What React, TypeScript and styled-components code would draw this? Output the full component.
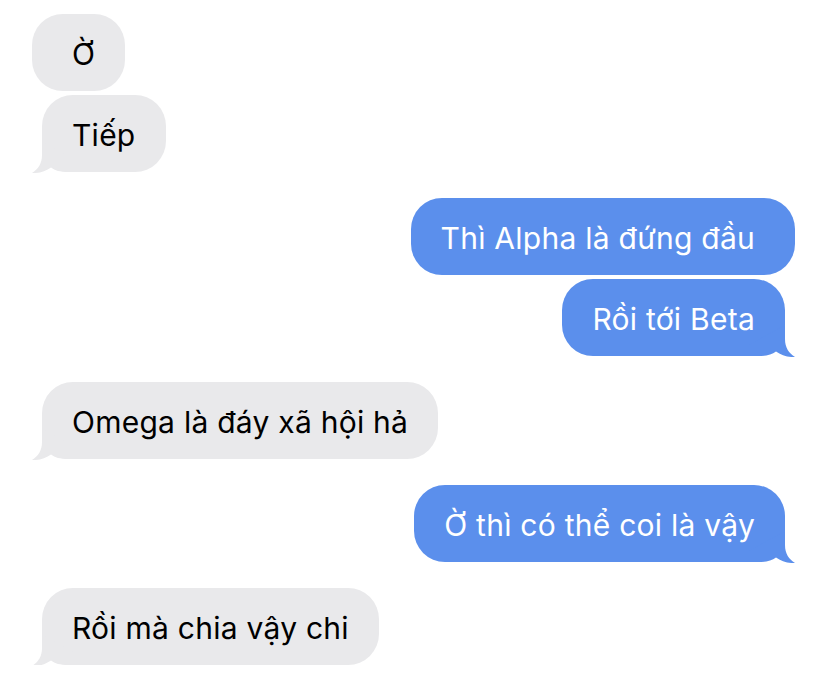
import styled, { createGlobalStyle } from "styled-components"

type Side = "them" | "me"

const GlobalStyle = createGlobalStyle`
  body {
    margin: 0;
    background: #ffffff;
    font-family: Inter, "Noto Sans", "Liberation Sans", sans-serif;
  }
`

const Thread = styled.div`
  display: flex;
  flex-direction: column;
  gap: 26px;
  padding: 14px 33px 0 32px;
`

const Group = styled.div<{ $side: Side }>`
  display: flex;
  flex-direction: column;
  align-items: ${(p) => (p.$side === "me" ? "flex-end" : "flex-start")};
  gap: 4px;
`

const Bubble = styled.div<{ $side: Side; $tail?: boolean }>`
  position: relative;
  box-sizing: border-box;
  height: 77px;
  display: flex;
  align-items: center;
  border-radius: 31px;
  font-size: 30px;
  letter-spacing: 0.25px;
  white-space: nowrap;
  background: ${(p) => (p.$side === "me" ? "#5b8fec" : "#e9e9eb")};
  color: ${(p) => (p.$side === "me" ? "#ffffff" : "#000000")};
  padding: ${(p) =>
    p.$side === "me"
      ? `2px ${p.$tail ? 30 : 40}px 0 30px`
      : `2px 30px 0 ${p.$tail ? 30 : 40}px`};
  margin: ${(p) =>
    p.$tail ? (p.$side === "me" ? "0 10px 0 0" : "0 0 0 10px") : "0"};
`

const TailSvg = styled.svg<{ $side: Side }>`
  position: absolute;
  bottom: -1px;
  width: 46px;
  height: 32px;
  ${(p) => (p.$side === "me" ? "right: -10px; transform: scaleX(-1);" : "left: -10px;")}
`

function Tail({ side }: { side: Side }) {
  return (
    <TailSvg $side={side} viewBox="0 0 46 32">
      <path
        d="M10 0 L10 14 C10 23 6 28 0 32 C7 32.5 14 30 19 26.5 C23 29.5 28 31 36 31 L46 31 L46 20 Z"
        fill={side === "me" ? "#5b8fec" : "#e9e9eb"}
      />
    </TailSvg>
  )
}

const groups: { side: Side; messages: string[] }[] = [
  { side: "them", messages: ["Ờ", "Tiếp"] },
  { side: "me", messages: ["Thì Alpha là đứng đầu", "Rồi tới Beta"] },
  { side: "them", messages: ["Omega là đáy xã hội hả"] },
  { side: "me", messages: ["Ờ thì có thể coi là vậy"] },
  { side: "them", messages: ["Rồi mà chia vậy chi"] },
]

export default function App() {
  return (
    <>
      <GlobalStyle />
      <Thread>
        {groups.map((g, gi) => (
          <Group key={gi} $side={g.side}>
            {g.messages.map((m, mi) => {
              const last = mi === g.messages.length - 1
              return (
                <Bubble key={mi} $side={g.side} $tail={last}>
                  {m}
                  {last ? <Tail side={g.side} /> : null}
                </Bubble>
              )
            })}
          </Group>
        ))}
      </Thread>
    </>
  )
}
